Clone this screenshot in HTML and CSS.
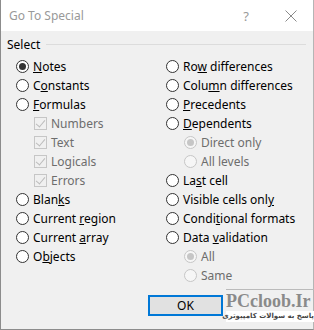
FILE: index.html
```html
<!DOCTYPE html>
<html>
<head>
<meta charset="utf-8">
<link rel="stylesheet" href="styles.css">
</head>
<body>
<div class="dialog">
  <div class="titlebar">
    <span class="title">Go To Special</span>
    <span class="help">?</span>
    <svg class="close" width="12" height="12" viewBox="0 0 12 12"><path d="M0.5 0.5L11.5 11.5M11.5 0.5L0.5 11.5" stroke="#8a8a8a" stroke-width="1" fill="none"/></svg>
  </div>
  <div class="content">
    <div class="group-head"><span>Select</span><div class="rule"></div></div>
    <div class="cols">
      <div class="col">
        <div class="row"><span class="radio on"></span><span><u>N</u>otes</span></div>
        <div class="row"><span class="radio"></span><span>C<u>o</u>nstants</span></div>
        <div class="row"><span class="radio"></span><span><u>F</u>ormulas</span></div>
        <div class="row sub dis"><span class="check"></span><span>Numbers</span></div>
        <div class="row sub dis"><span class="check"></span><span>Text</span></div>
        <div class="row sub dis"><span class="check"></span><span>Logicals</span></div>
        <div class="row sub dis"><span class="check"></span><span>Errors</span></div>
        <div class="row"><span class="radio"></span><span>Blan<u>k</u>s</span></div>
        <div class="row"><span class="radio"></span><span>Current <u>r</u>egion</span></div>
        <div class="row"><span class="radio"></span><span>Current <u>a</u>rray</span></div>
        <div class="row"><span class="radio"></span><span>O<u>b</u>jects</span></div>
      </div>
      <div class="col">
        <div class="row"><span class="radio"></span><span>Ro<u>w</u> differences</span></div>
        <div class="row"><span class="radio"></span><span>Colu<u>m</u>n differences</span></div>
        <div class="row"><span class="radio"></span><span><u>P</u>recedents</span></div>
        <div class="row"><span class="radio"></span><span><u>D</u>ependents</span></div>
        <div class="row sub dis"><span class="radio on"></span><span>Direct only</span></div>
        <div class="row sub dis"><span class="radio"></span><span>All levels</span></div>
        <div class="row"><span class="radio"></span><span>La<u>s</u>t cell</span></div>
        <div class="row"><span class="radio"></span><span>Visible cells onl<u>y</u></span></div>
        <div class="row"><span class="radio"></span><span>Condi<u>t</u>ional formats</span></div>
        <div class="row"><span class="radio"></span><span>Data <u>v</u>alidation</span></div>
        <div class="row sub dis"><span class="radio on"></span><span>All</span></div>
        <div class="row sub dis"><span class="radio"></span><span>Same</span></div>
      </div>
    </div>
    <div class="footer">
      <button class="ok">OK</button>
      <div class="mark">
        <div class="mark-en">PCcloob.Ir</div>
        <div class="mark-fa" dir="rtl">پاسخ به سوالات کامپیوتری</div>
      </div>
    </div>
  </div>
</div>
</body>
</html>
```
FILE: styles.css
```css
* { box-sizing: border-box; }
html, body { margin: 0; padding: 0; }
body {
  width: 314px;
  height: 330px;
  overflow: hidden;
  font-family: "Noto Sans", "Open Sans", sans-serif;
  font-size: 12px;
  color: #000;
  background: #fff;
}
.dialog {
  width: 314px;
  height: 330px;
  display: flex;
  flex-direction: column;
  border-left: 1px solid #8c8c8c;
  border-bottom: 1px solid #8c8c8c;
  border-right: 1px solid #b5b5b5;
}
.titlebar {
  height: 31px;
  background: #fff;
  display: flex;
  align-items: center;
  padding-left: 8px;
  flex-shrink: 0;
}
.title {
  color: #999;
  font-size: 12px;
  flex: 1;
}
.help {
  color: #999;
  font-size: 13px;
  margin-right: 36px;
}
.close { margin-right: 16px; }
.content {
  flex: 1;
  background: #f0f0f0;
  display: flex;
  flex-direction: column;
  padding: 5px 0 0 6px;
}
.group-head {
  display: flex;
  align-items: center;
  height: 16px;
  padding-right: 5px;
}
.rule {
  flex: 1;
  height: 1px;
  background: #dcdcdc;
  margin-left: 6px;
  margin-right: 2px;
}
.cols {
  display: grid;
  grid-template-columns: 150px 1fr;
  padding-left: 9px;
  margin-top: 5px;
}
.row {
  height: 19px;
  display: flex;
  align-items: center;
  white-space: nowrap;
}
.row.sub { padding-left: 18px; }
.row.dis { color: #6d6d6d; }
.radio {
  width: 13px;
  height: 13px;
  border: 1px solid #333;
  border-radius: 50%;
  background: #fff;
  margin-right: 4px;
  display: flex;
  align-items: center;
  justify-content: center;
  flex-shrink: 0;
}
.radio.on::after {
  content: "";
  width: 7px;
  height: 7px;
  border-radius: 50%;
  background: #333;
}
.dis .radio { border-color: #c6c6c6; background: #f6f6f6; }
.dis .radio.on::after { background: #c6c6c6; }
.check {
  width: 13px;
  height: 13px;
  border: 1px solid #c6c6c6;
  background: #f0f0f0;
  margin-right: 4px;
  position: relative;
  flex-shrink: 0;
}
.check::after {
  content: "";
  position: absolute;
  left: 3px;
  top: 0px;
  width: 4px;
  height: 8px;
  border-right: 1px solid #bcbcbc;
  border-bottom: 1px solid #bcbcbc;
  transform: rotate(40deg);
}
u { text-decoration: underline; text-underline-offset: 1px; }
.footer {
  display: flex;
  align-items: flex-start;
  margin-top: 4px;
  padding-left: 141px;
}
.ok {
  width: 75px;
  height: 21px;
  border: 2px solid #0078d7;
  background: #e1e1e1;
  font-family: "Noto Sans", sans-serif;
  font-size: 12px;
  padding: 0;
  margin-top: 6px;
  flex-shrink: 0;
}
.mark {
  margin-left: 3px;
  width: 88px;
  display: flex;
  flex-direction: column;
  align-items: flex-end;
}
.mark-en {
  font-family: "Liberation Serif", serif;
  font-weight: bold;
  font-size: 18px;
  color: #8a8a8a;
  line-height: 20px;
  border-top: 1px solid #bbb;
  padding-top: 1px;
  width: 88px;
  white-space: nowrap;
}
.mark-fa {
  font-family: "DejaVu Sans", sans-serif;
  font-size: 7px;
  font-weight: bold;
  color: #444;
  line-height: 11px;
  background: #fff;
  white-space: nowrap;
  width: 88px;
  text-align: right;
}
```
